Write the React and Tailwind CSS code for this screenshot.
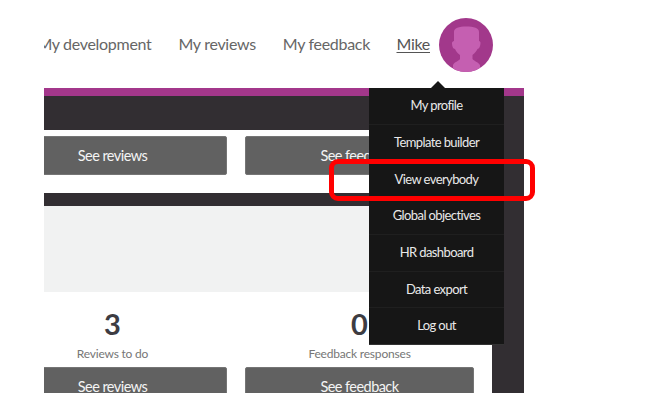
import React from "react";

const menuItems = ["My profile", "Template builder", "View everybody", "Global objectives", "HR dashboard", "Data export", "Log out"];

const SeeButton = ({ label }) => (
  <div className="w-[229px] h-[39px] shrink-0 flex items-center justify-center rounded-[2px] bg-[#616161] border border-[#757575] text-[14.5px] tracking-[-0.55px] text-[#f4f4f4]">
    {label}
  </div>
);

const Stat = ({ value, label }) => (
  <div className="w-[229px] shrink-0 flex flex-col items-center">
    <div className="h-[34px] leading-[34px] text-[29px] font-bold text-[#3d3c42]">{value}</div>
    <div className="mt-[3px] h-[20px] leading-[20px] text-[12px] tracking-[-0.2px] text-[#767676]">{label}</div>
  </div>
);

const App = () => {
  return (
    <div className="relative w-[658px] h-[404px] bg-white pl-[44px] overflow-hidden font-['Lato',sans-serif]">
      <div className="w-[480px] h-[393px] overflow-hidden">
        <nav className="h-[88px] pr-[31px] flex items-center justify-end text-[16px] tracking-[-0.3px] text-[#666666] whitespace-nowrap">
          <span className="shrink-0 mr-[27px]">My development</span>
          <span className="shrink-0 mr-[27px]">My reviews</span>
          <span className="shrink-0 mr-[26.5px]">My feedback</span>
          <span className="shrink-0 mr-[9px] underline underline-offset-2 text-[#555555]">Mike</span>
          <svg viewBox="0 0 54 54" className="w-[54px] h-[54px] shrink-0 mb-[-1px]">
            <defs>
              <clipPath id="avatar-clip">
                <circle cx="27" cy="27" r="27" />
              </clipPath>
            </defs>
            <circle cx="27" cy="27" r="27" fill="#a2388b" />
            <path
              d="M14 54L14 47C15 44 20 43 21 41L21 37C18 35 17 33 16 31C14 31 13 28 13 25C13 24 14 23 15 23L15 14C15 10 20 8.500 27 8.500C35 8.500 40 10 40 14L40 23C41 23 41.500 24 41.500 25C41.500 28 40 31 38.500 31C37.500 33 36 35 33.500 37L33.500 41C35 43 39 44 41 47L41 54Z"
              fill="#c55fb1"
              clipPath="url(#avatar-clip)"
            />
          </svg>
        </nav>
        <div className="h-[305px] bg-[#322e32] border-t-[8px] border-[#a3378b] pt-[34px]">
          <div className="flex h-[263px]">
            <div className="w-[448px] bg-white">
              <div className="h-[63px] pt-[6px] ml-[-46px] flex gap-[18px]">
                <SeeButton label="See reviews" />
                <SeeButton label="See feedback" />
              </div>
              <div className="h-[13px] bg-[#322e32]"></div>
              <div className="h-[86px] bg-[#f1f2f2] mr-[18px]"></div>
              <div className="pt-[15px] ml-[-46px] flex gap-[18px]">
                <Stat value="3" label="Reviews to do" />
                <Stat value="0" label="Feedback responses" />
              </div>
              <div className="mt-[3px] ml-[-46px] flex gap-[18px]">
                <SeeButton label="See reviews" />
                <SeeButton label="See feedback" />
              </div>
            </div>
          </div>
        </div>
      </div>

      <div className="absolute left-[369px] top-[88px] w-[135px] h-[257px] flex flex-col bg-[#161616] border-b border-[#333333]">
        <div className="absolute left-[62px] top-[-7px] w-0 h-0 border-x-[7px] border-x-transparent border-b-[7px] border-b-[#161616]"></div>
        {menuItems.map((item, i) => (
          <div
            key={item}
            className={`flex-1 flex items-center justify-center text-[13px] tracking-[-0.6px] text-[#e9e9e9] ${i < 6 ? "border-b border-[#1f1f1f]" : ""}`}
          >
            {item}
          </div>
        ))}
      </div>

      <div className="absolute left-[329px] top-[159px] w-[206px] h-[42px] border-[5px] border-[#ff0000] rounded-[9px]"></div>
    </div>
  );
};

export default App;
